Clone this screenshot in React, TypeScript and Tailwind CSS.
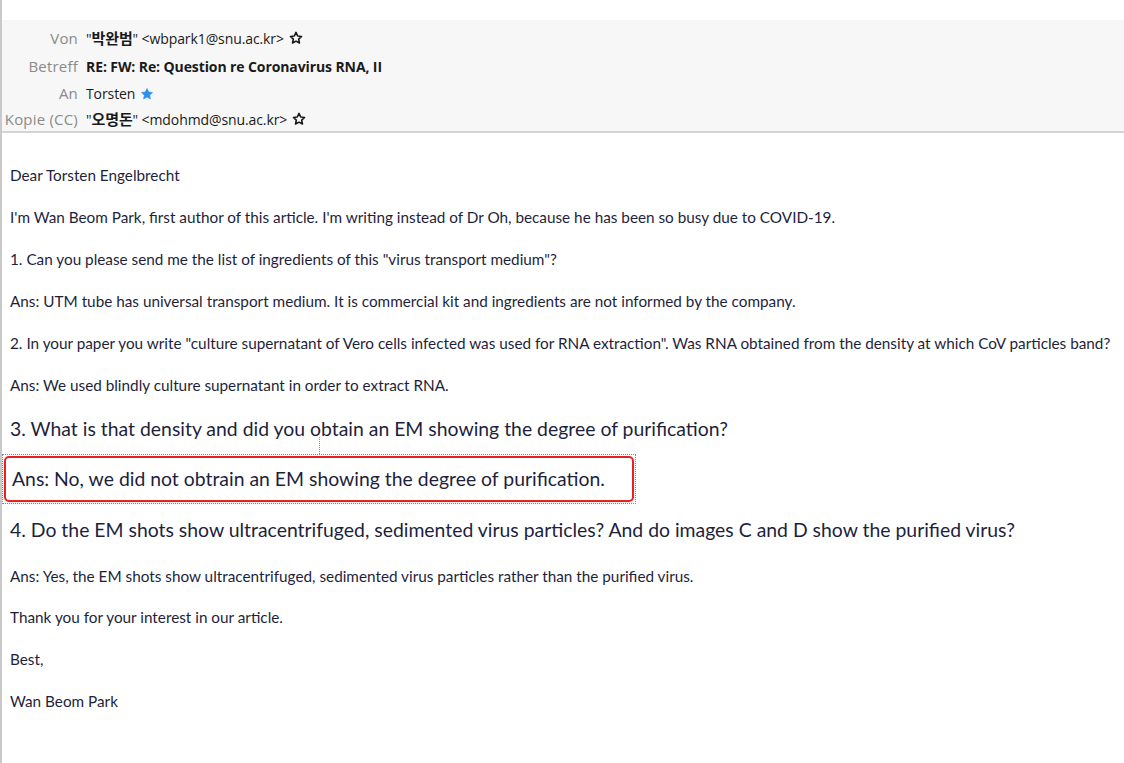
const headerFont = { fontFamily: '"Open Sans", "Noto Sans CJK KR", sans-serif' }
const korean = { fontFamily: '"Noto Sans CJK KR", sans-serif' }

function Star({ filled }: { filled?: boolean }) {
  return (
    <svg viewBox="0 0 24 24" className="ml-[5px] inline-block h-[14px] w-[14px]">
      <path
        d="M12 2.5l2.9 6.1 6.6.8-4.9 4.6 1.3 6.6L12 17.3l-5.9 3.3 1.3-6.6-4.9-4.6 6.6-.8z"
        fill={filled ? '#2b8ef0' : 'none'}
        stroke={filled ? '#2b8ef0' : '#1a1a1a'}
        strokeWidth={filled ? 1 : 2.8}
        strokeLinejoin="round"
      />
    </svg>
  )
}

function HeaderRow({ label, className = 'h-[27px]', children }: { label: string; className?: string; children: React.ReactNode }) {
  return (
    <div className={'flex items-center ' + className}>
      <div className="w-[76px] shrink-0 whitespace-nowrap text-right text-[15px] tracking-[0.2px] text-[#8a8a8a]">{label}</div>
      <div className="ml-[8px] flex items-center whitespace-nowrap text-[#1a1a1a]">{children}</div>
    </div>
  )
}

function Small({ children, className = '' }: { children: React.ReactNode; className?: string }) {
  return <p className={'h-[20px] whitespace-nowrap text-[15.3px] leading-[20px] ' + className}>{children}</p>
}

export default function App() {
  return (
    <div className="h-[763px] w-full overflow-hidden border-l-2 border-[#c9c9c9] bg-white">
      <div className="h-[20px]" />
      <div className="border-b-2 border-[#d4d4d6] bg-[#f7f7f7] pt-[3px] text-[14px] tracking-[-0.1px]" style={headerFont}>
        <HeaderRow label="Von" className="h-[30px]">
          <span>
            "<span className="text-[15px] font-semibold" style={korean}>박완범</span>" &lt;wbpark1@snu.ac.kr&gt;
          </span>
          <Star />
        </HeaderRow>
        <HeaderRow label="Betreff">
          <span className="font-bold">RE: FW: Re: Question re Coronavirus RNA, II</span>
        </HeaderRow>
        <HeaderRow label="An">
          <span>Torsten</span>
          <Star filled />
        </HeaderRow>
        <HeaderRow label="Kopie (CC)" className="h-[24px]">
          <span>
            "<span className="text-[15px] font-semibold" style={korean}>오명돈</span>" &lt;mdohmd@snu.ac.kr&gt;
          </span>
          <Star />
        </HeaderRow>
      </div>

      <div
        className="flex flex-col pl-[8px] pt-[32px] text-[#1e1f3d]"
        style={{ fontFamily: 'Lato, "Noto Sans", sans-serif' }}
      >
        <Small className="mb-[22px]">Dear Torsten Engelbrecht</Small>
        <Small className="mb-[22px]">
          I'm Wan Beom Park, first author of this article. I'm writing instead of Dr Oh, because he has been so busy due to COVID-19.
        </Small>
        <Small className="mb-[22px]">1. Can you please send me the list of ingredients of this "virus transport medium"?</Small>
        <Small className="mb-[22px]">
          Ans: UTM tube has universal transport medium. It is commercial kit and ingredients are not informed by the company.
        </Small>
        <Small className="mb-[22px]">
          2. In your paper you write "culture supernatant of Vero cells infected was used for RNA extraction". Was RNA obtained from the density at which CoV particles band?
        </Small>
        <Small>Ans: We used blindly culture supernatant in order to extract RNA.</Small>

        <p className="mt-[21px] h-[26px] whitespace-nowrap text-[19.4px] leading-[26px]">
          3. What is that density and did you obtain an EM showing the degree of purification?
        </p>

        <div className="relative -ml-[8px] mt-[12px] w-[634px] border border-dotted border-[#8c8c8c] p-px">
          <div className="absolute -top-[18px] left-[316px] h-[17px] border-l border-dotted border-[#8c8c8c]" />
          <div className="flex h-[46px] items-center rounded-[5px] border-2 border-[#e52222] pl-[6px] shadow-[0_1px_3px_rgba(0,0,0,0.15)]">
            <span className="whitespace-nowrap text-[19.4px] leading-[26px]">
              Ans: No, we did not obtrain an EM showing the degree of purification.
            </span>
          </div>
        </div>

        <p className="mt-[13px] h-[26px] whitespace-nowrap text-[19.4px] leading-[26px]">
          4. Do the EM shots show ultracentrifuged, sedimented virus particles? And do images C and D show the purified virus?
        </p>

        <Small className="mb-[21px] mt-[23px]">
          Ans: Yes, the EM shots show ultracentrifuged, sedimented virus particles rather than the purified virus.
        </Small>
        <Small className="mb-[22px]">Thank you for your interest in our article.</Small>
        <Small className="mb-[22px]">Best,</Small>
        <Small>Wan Beom Park</Small>
      </div>
    </div>
  )
}
